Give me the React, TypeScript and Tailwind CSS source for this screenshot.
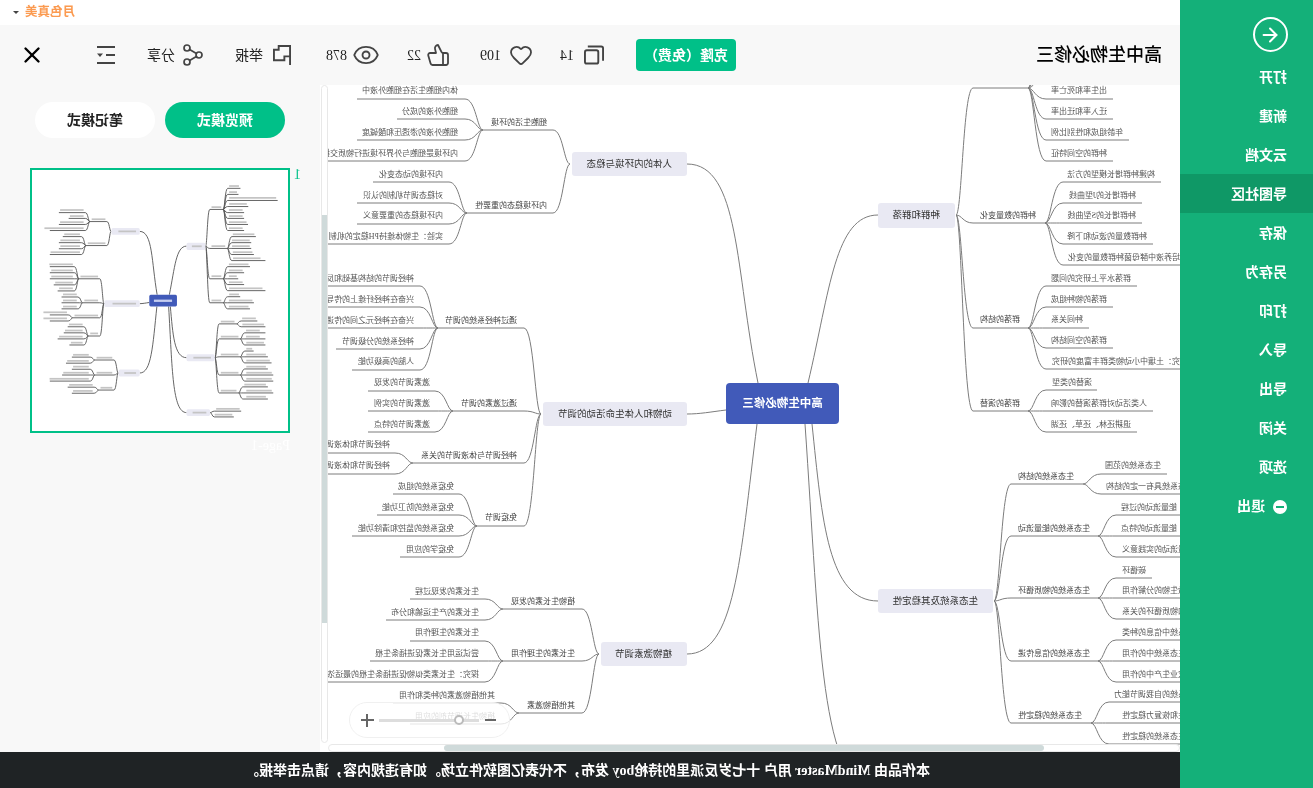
import { ArrowLeft, Eye, Heart, Share2, ThumbsUp, X } from 'lucide-react';

type Leaf = [string, number, number, number, number]; // text, text start, text y, line y, line end
type Sub = { t: string; r: number; y: number; ly: number; jx: number; leaves: Leaf[] };
type Branch = { t: string; box: [number, number, number, number]; r: number; bx: number; by: number; side: number; subs: Sub[] };

const branches: Branch[] = [
  {
    t: '人体的内环境与稳态', box: [572, 687, 152, 176], r: 672, bx: 570, by: 164, side: -1,
    subs: [
      {
        t: '细胞生活的环境', r: 547, y: 122, ly: 130, jx: 483,
        leaves: [
          ['体内细胞生活在细胞外液中', 458, 90, 99, 357],
          ['细胞外液的成分', 458, 111, 119, 397],
          ['细胞外液的渗透压和酸碱度', 458, 132, 140, 357],
          ['内环境是细胞与外界环境进行物质交换的媒介', 458, 153, 161, 320],
        ],
      },
      {
        t: '内环境稳态的重要性', r: 547, y: 205, ly: 213, jx: 467,
        leaves: [
          ['内环境的动态变化', 443, 174, 182, 373],
          ['对稳态调节机制的认识', 443, 195, 203, 357],
          ['内环境稳态的重要意义', 443, 215, 224, 357],
          ['实验：生物体维持PH稳定的机制', 443, 236, 244, 320],
        ],
      },
    ],
  },
  {
    t: '动物和人体生命活动的调节', box: [543, 687, 402, 426], r: 672, bx: 541, by: 414, side: -1,
    subs: [
      {
        t: '通过神经系统的调节', r: 517, y: 320, ly: 328, jx: 438,
        leaves: [
          ['神经调节的结构基础和反射', 414, 278, 286, 320],
          ['兴奋在神经纤维上的传导', 414, 299, 307, 320],
          ['兴奋在神经元之间的传递', 414, 320, 328, 320],
          ['神经系统的分级调节', 414, 341, 349, 336],
          ['人脑的高级功能', 414, 361, 370, 352],
        ],
      },
      {
        t: '通过激素的调节', r: 517, y: 403, ly: 411, jx: 453,
        leaves: [
          ['激素调节的发现', 430, 382, 391, 368],
          ['激素调节的实例', 430, 403, 411, 368],
          ['激素调节的特点', 430, 424, 432, 368],
        ],
      },
      {
        t: '神经调节与体液调节的关系', r: 517, y: 455, ly: 463, jx: 413,
        leaves: [
          ['神经调节和体液调节的比较', 390, 444, 453, 320],
          ['神经调节和体液调节的协调', 390, 465, 474, 320],
        ],
      },
      {
        t: '免疫调节', r: 517, y: 517, ly: 526, jx: 477,
        leaves: [
          ['免疫系统的组成', 454, 486, 494, 393],
          ['免疫系统的防卫功能', 454, 507, 515, 377],
          ['免疫系统的监控和清除功能', 454, 528, 536, 352],
          ['免疫学的应用', 454, 549, 557, 400],
        ],
      },
    ],
  },
  {
    t: '植物激素调节', box: [601, 687, 642, 666], r: 672, bx: 599, by: 654, side: -1,
    subs: [
      {
        t: '植物生长素的发现', r: 575, y: 601, ly: 609, jx: 503,
        leaves: [
          ['生长素的发现过程', 479, 591, 599, 410],
          ['生长素的产生运输和分布', 479, 612, 620, 386],
        ],
      },
      {
        t: '生长素的生理作用', r: 575, y: 653, ly: 661, jx: 503,
        leaves: [
          ['生长素的生理作用', 479, 632, 641, 410],
          ['尝试运用生长素促进插条生根', 479, 653, 661, 370],
          ['探究：生长素类似物促进插条生根的最适浓度', 479, 674, 682, 320],
        ],
      },
      {
        t: '其他植物激素', r: 575, y: 705, ly: 713, jx: 519,
        leaves: [
          ['其他植物激素的种类和作用', 495, 695, 703, 393],
          ['植物生长调节剂的应用', 495, 716, 724, 410],
        ],
      },
    ],
  },
  {
    t: '种群和群落', box: [878, 955, 203, 228], r: 940, bx: 956, by: 215, side: 1,
    subs: [
      {
        t: '种群的特征', r: 1020, y: 80, ly: 88, jx: 1028,
        leaves: [
          ['种群的概念', 1092, 7, 15, 1098],
          ['种群密度', 1084, 28, 36, 1090],
          ['探究：用样方法调查草地中某种双子叶植物的种群密度', 1244, 48, 57, 1250],
          ['种群密度的调查方法', 1124, 69, 78, 1130],
          ['出生率和死亡率', 1107, 90, 99, 1113],
          ['迁入率和迁出率', 1107, 111, 119, 1113],
          ['年龄组成和性别比例', 1123, 132, 140, 1129],
          ['种群的空间特征', 1107, 153, 161, 1113],
        ],
      },
      {
        t: '种群的数量变化', r: 1036, y: 215, ly: 223, jx: 1045,
        leaves: [
          ['构建种群增长模型的方法', 1155, 174, 182, 1161],
          ['种群增长的J型曲线', 1136, 195, 203, 1142],
          ['种群增长的S型曲线', 1136, 215, 223, 1142],
          ['种群数量的波动和下降', 1147, 236, 244, 1153],
          ['培养液中酵母菌种群数量的变化', 1180, 257, 265, 1200],
        ],
      },
      {
        t: '群落的结构', r: 1020, y: 319, ly: 328, jx: 1028,
        leaves: [
          ['群落水平上研究的问题', 1131, 278, 286, 1137],
          ['群落的物种组成', 1107, 299, 307, 1113],
          ['种间关系', 1083, 319, 328, 1089],
          ['群落的空间结构', 1107, 340, 348, 1113],
          ['探究：土壤中小动物类群丰富度的研究', 1188, 361, 369, 1200],
        ],
      },
      {
        t: '群落的演替', r: 1020, y: 403, ly: 411, jx: 1028,
        leaves: [
          ['演替的类型', 1092, 382, 390, 1097],
          ['人类活动对群落演替的影响', 1147, 403, 411, 1153],
          ['退耕还林、还草、还湖', 1131, 424, 432, 1137],
        ],
      },
    ],
  },
  {
    t: '生态系统及其稳定性', box: [878, 993, 589, 613], r: 978, bx: 994, by: 601, side: 1,
    subs: [
      {
        t: '生态系统的结构', r: 1074, y: 476, ly: 484, jx: 1083,
        leaves: [
          ['生态系统的范围', 1161, 465, 474, 1167],
          ['生态系统具有一定的结构', 1194, 486, 494, 1200],
        ],
      },
      {
        t: '生态系统的能量流动', r: 1090, y: 528, ly: 536, jx: 1098,
        leaves: [
          ['能量流动的过程', 1177, 507, 515, 1200],
          ['能量流动的特点', 1177, 528, 536, 1200],
          ['能量流动的实践意义', 1194, 549, 557, 1200],
        ],
      },
      {
        t: '生态系统的物质循环', r: 1090, y: 590, ly: 598, jx: 1098,
        leaves: [
          ['碳循环', 1146, 570, 578, 1152],
          ['土壤微生物的分解作用', 1202, 590, 598, 1210],
          ['能量流动和物质循环的关系', 1218, 611, 619, 1225],
        ],
      },
      {
        t: '生态系统的信息传递', r: 1090, y: 653, ly: 661, jx: 1098,
        leaves: [
          ['生态系统中信息的种类', 1202, 632, 640, 1210],
          ['信息传递在生态系统中的作用', 1226, 653, 661, 1232],
          ['信息传递在农业生产中的作用', 1226, 674, 682, 1232],
        ],
      },
      {
        t: '生态系统的稳定性', r: 1082, y: 715, ly: 723, jx: 1091,
        leaves: [
          ['生态系统的自我调节能力', 1202, 694, 702, 1210],
          ['抵抗力稳定性和恢复力稳定性', 1226, 715, 723, 1232],
          ['提高生态系统的稳定性', 1202, 736, 744, 1210],
        ],
      },
    ],
  },
  {
    t: '生态环境的保护', box: [878, 974, 779, 803], r: 959, bx: 975, by: 791, side: 1,
    subs: [
      { t: '人口增长对生态环境的影响', r: 1095, y: 778, ly: 786, jx: 1101, leaves: [] },
      { t: '保护我们共同的家园', r: 1065, y: 798, ly: 806, jx: 1071, leaves: [] },
    ],
  },
];

const rootLinks = [
  'M808 383C830 290 835 215 878 215',
  'M758 383C735 270 740 164 687 164',
  'M726 410C710 412 700 414 687 414',
  'M757 424C740 560 735 654 687 654',
  'M812 424C822 520 828 601 878 601',
  'M805 424C820 640 820 791 878 791',
];

function curve(jx: number, jy: number, ex: number, ly: number, side: number, d: number) {
  return `M${jx} ${jy}C${jx + side * 6} ${jy} ${jx + side * 7} ${ly} ${jx + side * d} ${ly}L${ex} ${ly}`;
}

function allPaths() {
  const out = [...rootLinks];
  branches.forEach((b) =>
    b.subs.forEach((s) => {
      out.push(curve(b.bx, b.by, s.jx, s.ly, b.side, 17));
      s.leaves.forEach((l) => out.push(curve(s.jx, s.ly, l[4], l[3], b.side, 18)));
    }),
  );
  return out;
}

const paths = allPaths();

// only what falls inside the canvas gets real text, the rest shows up in the page preview only
const onCanvas = (y: number) => y > 85 && y < 752;

function MindMap() {
  return (
    <div className="absolute left-0 top-0 bottom-0 right-2 overflow-hidden blur-[0.3px]">
      <svg className="absolute inset-0 w-full h-full" fill="none">
        <g transform="translate(1180 -85) scale(-1 1)" stroke="#7c7c7c" strokeWidth="1">
          {paths.map((d, i) => (
            <path key={i} d={d} />
          ))}
        </g>
      </svg>
      <div
        className="absolute flex items-center justify-center bg-[#415ab9] rounded-[4px] text-white text-[11.5px] font-bold"
        style={{ left: 1180 - 839, top: 383 - 85, width: 113, height: 41 }}
      >
        高中生物必修三
      </div>
      {branches.filter((b) => onCanvas(b.by)).map((b) => (
        <div key={b.t}>
          <div
            className="absolute flex items-center bg-[#e9e9f3] rounded-[3px] text-[9.5px] text-[#333] whitespace-nowrap"
            style={{ left: 1180 - b.box[1], top: b.box[2] - 85, width: b.box[1] - b.box[0], height: b.box[3] - b.box[2], paddingLeft: b.box[1] - b.r }}
          >
            {b.t}
          </div>
          {b.subs.filter((s) => onCanvas(s.y)).map((s) => (
            <div
              key={s.t}
              className="absolute -translate-y-1/2 whitespace-nowrap leading-none text-[8px] text-[#444]"
              style={{ left: 1180 - s.r, top: s.y - 84 }}
            >
              {s.t}
            </div>
          ))}
          {b.subs.map((s) =>
            s.leaves.filter((l) => onCanvas(l[2])).map((l) => (
              <div
                key={l[0] + l[2]}
                className="absolute -translate-y-1/2 whitespace-nowrap leading-none text-[8px] text-[#555]"
                style={{ left: 1180 - l[1], top: l[2] - 84 }}
              >
                {l[0]}
              </div>
            )),
          )}
        </div>
      ))}
    </div>
  );
}

// page preview: same map squeezed down, text reads only as grey dashes
function Thumb() {
  const bar = (key: string, text: string, r: number, y: number) => (
    <rect key={key} x={r - text.length * 8} y={y - 3} width={text.length * 8} height={6} fill="#c4c4c4" />
  );
  return (
    <svg className="w-full h-full blur-[0.5px]" fill="none">
      <g transform="matrix(-0.245 0 0 0.289 316.6 14)">
        {paths.map((d, i) => (
          <path key={i} d={d} stroke="#555" strokeWidth="0.9" vectorEffect="non-scaling-stroke" />
        ))}
        <rect x={726} y={383} width={113} height={41} rx={6} fill="#415ab9" />
        <rect x={745} y={400} width={74} height={8} fill="#c5cdf0" />
        {branches.map((b) => (
          <g key={b.t}>
            <rect x={b.box[0]} y={b.box[2]} width={b.box[1] - b.box[0]} height={b.box[3] - b.box[2]} rx={6} fill="#e9e9f3" />
            {bar(b.t, b.t, b.r, (b.box[2] + b.box[3]) / 2)}
            {b.subs.map((s) => (
              <g key={s.t}>
                {bar(s.t, s.t, s.r, s.y)}
                {s.leaves.map((l) => bar(l[0] + l[2], l[0], l[1], l[2]))}
              </g>
            ))}
          </g>
        ))}
      </g>
    </svg>
  );
}

const menu = ['打开', '新建', '云文档', '导图社区', '保存', '另存为', '打印', '导入', '导出', '关闭', '选项'];

function Sidebar() {
  return (
    <aside className="w-[133px] shrink-0 bg-[#14b079] text-white text-[14px] font-bold">
      <div className="h-[57px] pl-[25px] pt-[17px]">
        <div className="w-[35px] h-[35px] rounded-full border-2 border-white flex items-center justify-center">
          <ArrowLeft size={22} strokeWidth={2.2} />
        </div>
      </div>
      {menu.map((m) => (
        <div key={m} className={`h-[39px] pl-[26px] pt-[2px] flex items-center ${m === '导图社区' ? 'bg-[#0f9866]' : ''}`}>
          {m}
        </div>
      ))}
      <div className="h-[39px] pl-[26px] pt-[2px] flex items-center gap-2">
        <span className="w-[14px] h-[14px] rounded-full bg-white flex items-center justify-center">
          <span className="w-[8px] h-[2px] bg-[#14b079]" />
        </span>
        退出
      </div>
    </aside>
  );
}

function Toolbar() {
  return (
    <div className="h-[60px] shrink-0 bg-[#f8f8f8] pl-[18px] flex items-center text-[14px] text-[#222]">
      <div className="w-[426px] text-[18px] text-black font-medium">高中生物必修三</div>
      <button className="w-[100px] h-[32px] rounded-[4px] bg-[#00c088] text-white text-[14px] font-bold">克隆（免费）</button>
      <svg className="ml-[32px]" width="20" height="20" viewBox="0 0 21 20" fill="none" stroke="#444" strokeWidth="2">
        <rect x="6" y="5" width="14" height="14" rx="2" />
        <path d="M1 16V3a2 2 0 0 1 2-2h14" />
      </svg>
      <span className="ml-[10px]">14</span>
      <Heart className="ml-[27px]" size={24} color="#444" strokeWidth={1.8} />
      <span className="ml-[8px]">109</span>
      <ThumbsUp className="ml-[30px]" size={24} color="#444" strokeWidth={1.8} />
      <span className="ml-[5px]">22</span>
      <Eye className="ml-[27px]" size={28} color="#444" strokeWidth={1.6} />
      <span className="ml-[5px]">878</span>
      <svg className="ml-[35px]" width="18" height="20" viewBox="0 0 19 21" fill="none" stroke="#444" strokeWidth="2">
        <path d="M1 21V1h12v4h5v11H7v-4H1" />
      </svg>
      <span className="ml-[10px]">举报</span>
      <Share2 className="ml-[30px]" size={24} color="#444" strokeWidth={1.7} />
      <span className="ml-[6px]">分享</span>
      <svg className="ml-[32px]" width="18" height="18" viewBox="0 0 18 18" fill="#444">
        <rect x="0" y="0" width="18" height="2" />
        <rect x="0" y="8" width="9" height="2" />
        <path d="M12 7.5h6l-3 3.5z" />
        <rect x="0" y="16" width="18" height="2" />
      </svg>
      <X className="ml-[52px] text-black" size={26} strokeWidth={2.2} />
    </div>
  );
}

function Canvas() {
  return (
    <div className="flex-1 relative overflow-hidden bg-white">
      <MindMap />
      {/* vertical scrollbar */}
      <div className="absolute right-[1px] top-0 bottom-[9px] w-[7px] rounded-full bg-white border border-[#e8e8e8] overflow-hidden">
        <div className="mt-[129px] h-[408px] bg-[#cfdada]" />
      </div>
      {/* horizontal scrollbar */}
      <div className="absolute left-0 right-2 bottom-0 h-[8px] rounded-full bg-white border border-[#e8e8e8] overflow-hidden">
        <div className="ml-[135px] w-[600px] h-full bg-[#cfdada] rounded-full" />
      </div>
      {/* zoom control */}
      <div className="absolute left-[670px] bottom-[14px] w-[161px] h-[36px] rounded-full bg-white/80 border border-[#f0f0f0] flex items-center text-[#666]">
        <span className="ml-[13px] w-[11px] h-[2px] bg-[#666]" />
        <div className="relative ml-[6px] w-[100px] h-[3px] bg-[#ddd]">
          <span className="absolute left-[15px] top-[-4px] w-[10px] h-[10px] rounded-full bg-white border-2 border-[#bbb]" />
        </div>
        <span className="relative ml-[5px] w-[13px] h-[13px]">
          <span className="absolute left-0 top-[5.5px] w-[13px] h-[2px] bg-[#666]" />
          <span className="absolute left-[5.5px] top-0 w-[2px] h-[13px] bg-[#666]" />
        </span>
      </div>
    </div>
  );
}

function RightPanel() {
  return (
    <div className="w-[320px] shrink-0 bg-[#f8f8f8] pt-[17px]">
      <div className="pl-[35px] flex gap-[10px] text-[14px] font-bold">
        <button className="w-[120px] h-[36px] rounded-full bg-[#00c088] text-white">预览模式</button>
        <button className="w-[120px] h-[36px] rounded-full bg-white text-[#222]">笔记模式</button>
      </div>
      <div className="mt-[30px] pl-[19px] flex">
        <span className="w-[11px] text-[14px] leading-[14px] text-[#00c088]">1</span>
        <div>
          <div className="w-[260px] h-[265px] border-2 border-[#00c088] bg-white">
            <Thumb />
          </div>
          <div className="mt-[2px] text-[14px] text-white">Page-1</div>
        </div>
      </div>
    </div>
  );
}

export default function App() {
  return (
    <div className="w-[1313px] h-[788px] overflow-hidden -scale-x-100 flex bg-white font-['Liberation_Serif','Noto_Sans_CJK_SC',serif]">
      <Sidebar />
      <main className="flex-1 flex flex-col min-w-0">
        <div className="h-[25px] shrink-0 flex items-center justify-end pr-[13px] gap-[6px] text-[12.5px] font-bold text-[#fb9a50]">
          月色真美
          <span className="w-0 h-0 border-x-[3px] border-x-transparent border-t-[3px] border-t-[#444]" />
        </div>
        <Toolbar />
        <div className="flex-1 flex min-h-0">
          <Canvas />
          <RightPanel />
        </div>
        <div className="h-[36px] shrink-0 bg-[#1f2325] text-white text-[14px] font-bold flex items-center justify-center pl-[5px]">
          本作品由 MindMaster 用户 十七岁反派里的持枪boy 发布，不代表亿图软件立场。如有违规内容，请点击举报。
        </div>
      </main>
    </div>
  );
}
